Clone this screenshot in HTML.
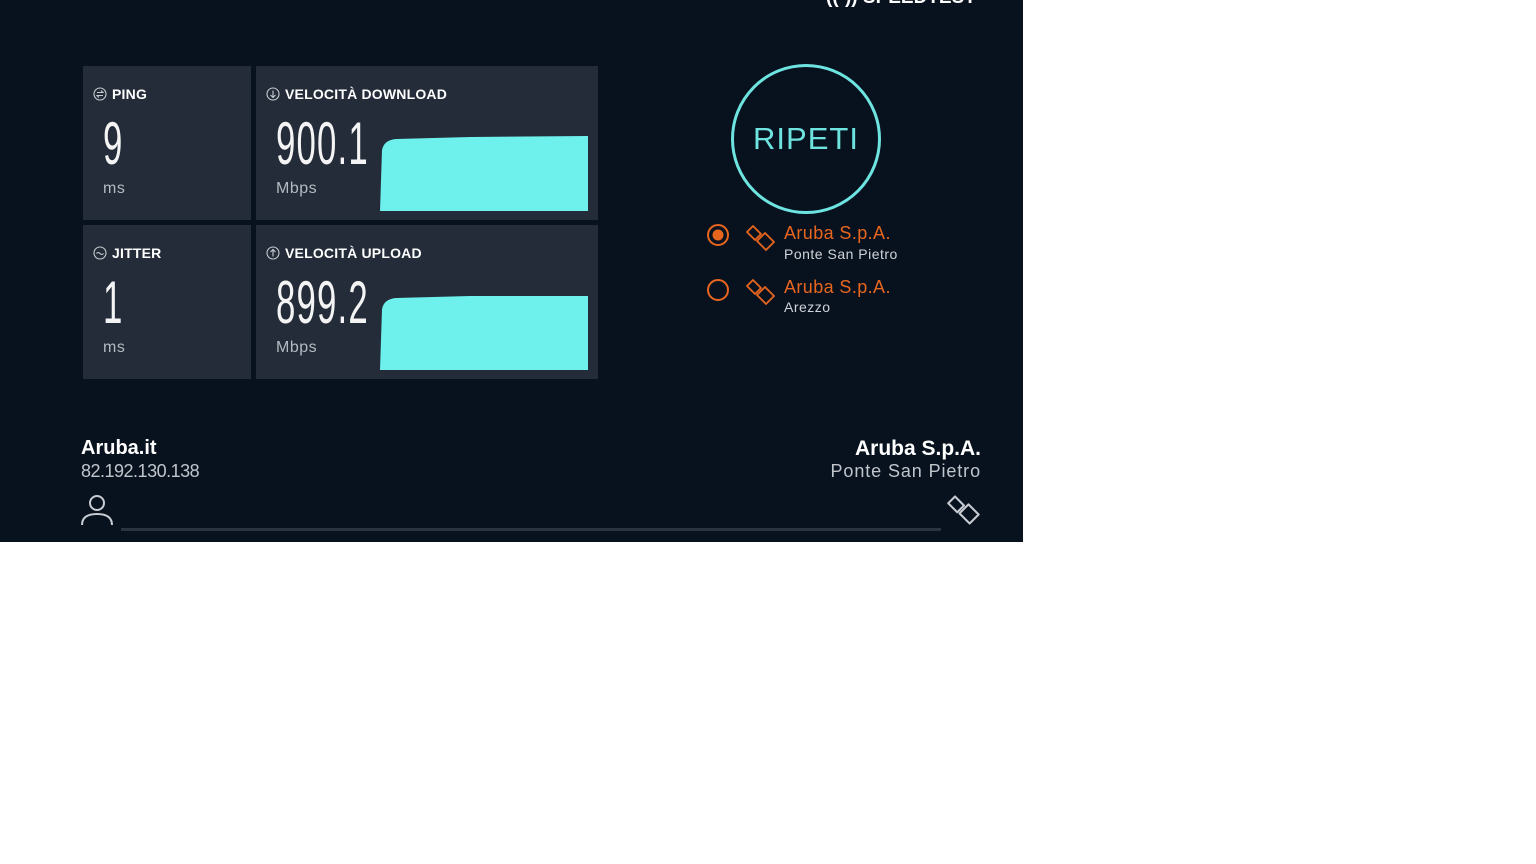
<!DOCTYPE html>
<html><head><meta charset="utf-8"><style>
body{margin:0;width:1536px;height:864px;background:#fff;font-family:"Liberation Sans",sans-serif;position:relative;overflow:hidden}
#app{position:absolute;left:0;top:0;width:1023px;height:542px;background:#08121f;overflow:hidden}
.card{position:absolute;background:#232c38}
.lbl{position:absolute;left:10px;top:20px;color:#fff;font-size:14px;font-weight:bold;letter-spacing:.2px;display:flex;align-items:center;gap:5px}
.num{position:absolute;top:48px;color:#f4f4f4;font-size:60px;transform:scaleX(.58);transform-origin:left top;line-height:1;letter-spacing:2px;font-family:"DejaVu Sans ExtraLight","Liberation Sans",sans-serif;font-weight:200}
.unit{position:absolute;top:114px;color:#b4bac2;font-size:16px;letter-spacing:.5px}
.abs{position:absolute}
</style></head><body><div id="app">
<div class="abs" style="left:826px;top:-13px;color:#fff;font-size:19px;font-weight:bold">((·)) SPEEDTEST</div>

<div class="card" style="left:83px;top:66px;width:168px;height:154px">
 <div class="lbl"><svg width="14" height="14" viewBox="0 0 14 14" fill="none" stroke="#c8ccd2" stroke-width="1.1"><circle cx="7" cy="7" r="6"/><path d="M4 5.5h6l-2-2M10 8.5H4l2 2"/></svg>PING</div>
 <div class="num" style="left:20px">9</div><div class="unit" style="left:20px">ms</div></div>
<div class="card" style="left:256px;top:66px;width:342px;height:154px">
 <div class="lbl"><svg width="14" height="14" viewBox="0 0 14 14" fill="none" stroke="#c8ccd2" stroke-width="1.1"><circle cx="7" cy="7" r="6"/><path d="M7 3.5v7M4.5 8l2.5 2.5L9.5 8"/></svg>VELOCITÀ DOWNLOAD</div>
 <div class="num" style="left:20px">900.1</div><div class="unit" style="left:20px">Mbps</div>
 <svg class="abs" style="left:124px;top:70px" width="208" height="75"><path d="M0 75 L2 14 Q4 4 16 3 L90 1 L208 0 L208 75Z" fill="#6ef0ec"/></svg></div>
<div class="card" style="left:83px;top:225px;width:168px;height:154px">
 <div class="lbl"><svg width="14" height="14" viewBox="0 0 14 14" fill="none" stroke="#c8ccd2" stroke-width="1.1"><circle cx="7" cy="7" r="6"/><path d="M3.5 7.5q1.7-2 3.5 0t3.5 0"/></svg>JITTER</div>
 <div class="num" style="left:20px">1</div><div class="unit" style="left:20px">ms</div></div>
<div class="card" style="left:256px;top:225px;width:342px;height:154px">
 <div class="lbl"><svg width="14" height="14" viewBox="0 0 14 14" fill="none" stroke="#c8ccd2" stroke-width="1.1"><circle cx="7" cy="7" r="6"/><path d="M7 10.5v-7M4.5 6L7 3.5 9.5 6"/></svg>VELOCITÀ UPLOAD</div>
 <div class="num" style="left:20px">899.2</div><div class="unit" style="left:20px">Mbps</div>
 <svg class="abs" style="left:124px;top:70px" width="208" height="75"><path d="M0 75 L2 14 Q4 4 16 3 L90 1 L208 1 L208 75Z" fill="#6ef0ec"/></svg></div>

<div class="abs" style="left:731px;top:64px;width:144px;height:144px;border:3px solid #6ee4e0;border-radius:50%;color:#6ee4e0;font-size:31px;text-align:center;line-height:144px;letter-spacing:1px">RIPETI</div>

<svg class="abs" style="left:706px;top:223px" width="24" height="24"><circle cx="12" cy="12" r="10" fill="none" stroke="#e8651e" stroke-width="2"/><circle cx="12" cy="12" r="5.5" fill="#e8651e"/></svg>
<svg class="abs" style="left:706px;top:278px" width="24" height="24"><circle cx="12" cy="12" r="10" fill="none" stroke="#e8651e" stroke-width="2"/></svg>
<svg class="abs" style="left:745px;top:223px" width="32" height="30" viewBox="0 0 32 30" fill="none" stroke="#e8651e" stroke-width="1.8" stroke-linejoin="round"><path d="M2 9l6-6 8 8-6 6z M12 18l8-8 9 9-8 8z"/></svg>
<svg class="abs" style="left:745px;top:277px" width="32" height="30" viewBox="0 0 32 30" fill="none" stroke="#e8651e" stroke-width="1.8" stroke-linejoin="round"><path d="M2 9l6-6 8 8-6 6z M12 18l8-8 9 9-8 8z"/></svg>
<div class="abs" style="left:784px;top:223px;color:#e8651e;font-size:18px;letter-spacing:.4px">Aruba S.p.A.</div>
<div class="abs" style="left:784px;top:246px;color:#d0d4da;font-size:14px;letter-spacing:.5px">Ponte San Pietro</div>
<div class="abs" style="left:784px;top:277px;color:#e8651e;font-size:18px;letter-spacing:.4px">Aruba S.p.A.</div>
<div class="abs" style="left:784px;top:299px;color:#d0d4da;font-size:14px;letter-spacing:.5px">Arezzo</div>

<div class="abs" style="left:81px;top:437px;color:#fff;font-size:20px;font-weight:bold">Aruba.it</div>
<div class="abs" style="left:81px;top:461px;color:#c0c5cc;font-size:18px;letter-spacing:-.5px">82.192.130.138</div>
<div class="abs" style="right:42px;top:437px;color:#fff;font-size:21px;font-weight:bold">Aruba S.p.A.</div>
<div class="abs" style="right:42px;top:461px;color:#c0c5cc;font-size:18px;letter-spacing:.9px">Ponte San Pietro</div>
<svg class="abs" style="left:80px;top:494px" width="34" height="32" fill="none" stroke="#c8ccd2" stroke-width="2"><circle cx="17" cy="9" r="7"/><path d="M2 31q0-11 15-11t15 11"/></svg>
<div class="abs" style="left:121px;top:528px;width:820px;height:3px;background:#2b333e"></div>
<svg class="abs" style="left:946px;top:493px" width="36" height="34" viewBox="0 0 32 30" fill="none" stroke="#c8ccd2" stroke-width="1.8" stroke-linejoin="round"><path d="M2 9l6-6 8 8-6 6z M12 18l8-8 9 9-8 8z"/></svg>
</div></body></html>
